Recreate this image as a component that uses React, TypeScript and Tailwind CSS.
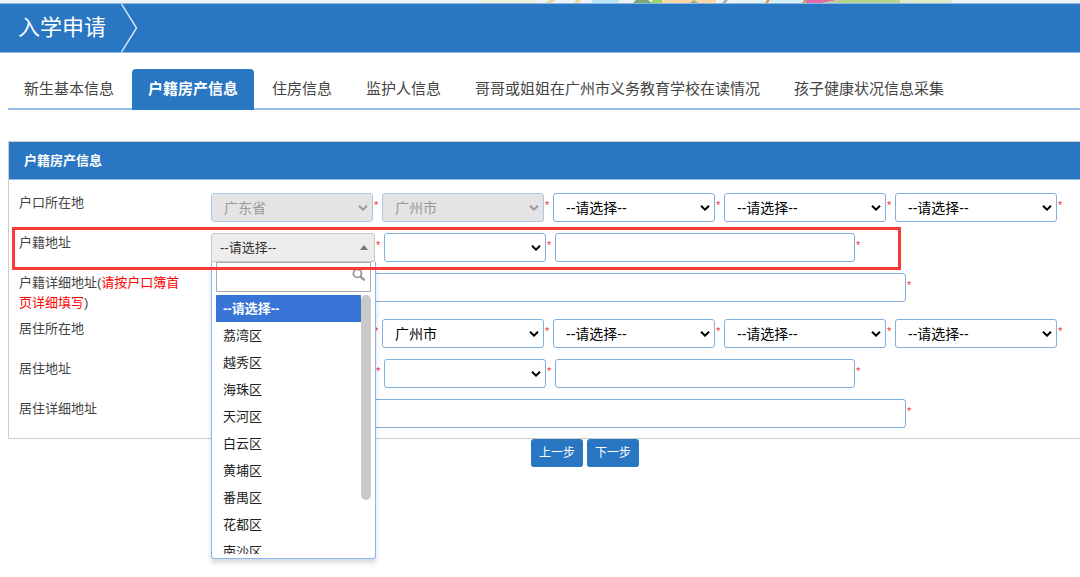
import { useState } from 'react';

const TABS = [
  '新生基本信息',
  '户籍房产信息',
  '住房信息',
  '监护人信息',
  '哥哥或姐姐在广州市义务教育学校在读情况',
  '孩子健康状况信息采集',
];

const DISTRICTS = [
  '--请选择--',
  '荔湾区',
  '越秀区',
  '海珠区',
  '天河区',
  '白云区',
  '黄埔区',
  '番禺区',
  '花都区',
  '南沙区',
];

const FIELD = 'h-[29px] rounded-[3px] border border-[#7fb0e0] bg-white text-sm text-black outline-none';

function Star() {
  return <span className="w-[9px] shrink-0 pt-0.5 pl-px text-[11px] leading-5 text-red-500">*</span>;
}

function Row({ label, htmlFor, children }: { label: React.ReactNode; htmlFor: string; children: React.ReactNode }) {
  return (
    <div className="relative flex items-start pt-1.5">
      <label htmlFor={htmlFor} className="w-48 shrink-0 pr-6 text-[13px] leading-5 text-[#444]">
        {label}
      </label>
      <div className="mb-[5px] flex shrink-0">{children}</div>
    </div>
  );
}

function Select({ id, name, value = '', disabled }: { id?: string; name: string; value?: string; disabled?: boolean }) {
  return (
    <>
      <span className="relative w-[162px] shrink-0">
        <select
          id={id}
          aria-label={name}
          disabled={disabled}
          className={`${FIELD} w-full appearance-none pl-3 disabled:border-[#a9c8e8] disabled:bg-[#e4e4e4] disabled:text-[#999] disabled:opacity-100`}
        >
          <option>{value}</option>
        </select>
        <svg
          viewBox="0 0 10 6"
          className={`pointer-events-none absolute top-3 right-[5px] h-1.5 w-2.5 ${disabled ? 'text-[#999]' : 'text-black'}`}
          fill="none"
          stroke="currentColor"
          strokeWidth="2"
        >
          <path d="M1 0.8 L5 4.6 L9 0.8" />
        </svg>
      </span>
      <Star />
    </>
  );
}

function DistrictPicker({ id, initial, defaultOpen }: { id: string; initial: string; defaultOpen?: boolean }) {
  const [open, setOpen] = useState(!!defaultOpen);
  const [value, setValue] = useState(initial);
  const [query, setQuery] = useState('');

  return (
    <>
      <div className="relative w-[164px] shrink-0">
        <button
          id={id}
          type="button"
          onClick={() => setOpen(!open)}
          className={`flex h-[29px] w-full items-center justify-between border border-[#c8c8c8] bg-[#ededed] pr-1.5 pl-2 text-[13px] text-[#333] ${open ? 'rounded-t-[3px]' : 'rounded-[3px]'}`}
        >
          <span>{value}</span>
          <svg viewBox="0 0 8 5" className="h-[5px] w-2 fill-[#777]">
            <path d="M4 0 L8 5 H0 Z" />
          </svg>
        </button>

        {open && (
          <div className="absolute top-full -right-px left-0 z-10 rounded-b-[3px] border border-t-0 border-[#8ab4f8] bg-white px-1 pb-1 shadow-[0_4px_5px_rgba(0,0,0,0.15)]">
            <div className="relative">
              <input
                aria-label="搜索"
                value={query}
                onChange={(e) => setQuery(e.target.value)}
                className="block h-[30px] w-full border border-[#aaa] pr-6 pl-1 text-[13px] outline-none"
              />
              <svg viewBox="0 0 14 14" className="absolute top-1.5 right-[5px] size-3.5" fill="none" stroke="#999">
                <circle cx="5.4" cy="5.4" r="4" strokeWidth="1.8" />
                <path d="M8.4 8.4 L12.6 12.4" strokeWidth="2.4" />
              </svg>
            </div>
            <div className="mt-[3px] flex h-[259px] overflow-hidden">
              <ul className="grow text-[13px] leading-[27px] text-[#222]">
                {DISTRICTS.filter((d) => d.includes(query)).map((d) => (
                  <li
                    key={d}
                    onClick={() => {
                      setValue(d);
                      setOpen(false);
                    }}
                    className={`cursor-pointer pl-[7px] ${d === value ? 'bg-[#3875d7] font-bold text-white' : ''}`}
                  >
                    {d}
                  </li>
                ))}
              </ul>
              <div className="h-[205px] w-2.5 rounded-full bg-[#c9c9c9]" />
            </div>
          </div>
        )}
      </div>
      <Star />
    </>
  );
}

// Sliver of the site banner above the title bar
function Banner() {
  return (
    <svg viewBox="0 0 1080 3" preserveAspectRatio="none" className="block h-[3px] w-full bg-[#eef2f9]">
      <rect x="480" width="56" height="3" fill="#ecefdc" />
      <path d="M545 3 L550 0 H556 L551 3 Z M574 3 L576 0 H581 L578 3 Z" fill="#ecd98f" />
      <rect x="592" width="27" height="3" fill="#b9e6f5" />
      <path d="M633 3 L636 0 H648 L652 3 Z" fill="#7fa876" />
      <rect x="652" width="10" height="3" fill="#9ed86a" />
      <rect x="662" width="54" height="3" fill="#f8d8a6" />
      <path d="M690 3 L694 0 L698 3 Z M722 3 L725 0 H728 L725 3 Z" fill="#93b088" />
      <rect x="740" width="26" height="3" fill="#e2f3f2" />
      <path d="M765 3 L767 0 H770 L768 3 Z M802 3 L804 0 H807 L805 3 Z" fill="#d89a55" />
      <rect x="770" width="32" height="3" fill="#d5f0f7" />
      <path d="M806 3 V0 H838 L822 3 Z" fill="#df6bab" />
      <path d="M822 3 L838 0 H900 V3 Z" fill="#b4d490" />
      <rect x="900" width="52" height="3" fill="#dfebc6" />
    </svg>
  );
}

export default function App() {
  const [tab, setTab] = useState(1);

  return (
    <main className="min-h-screen overflow-x-hidden bg-white font-['Liberation_Sans','Noto_Sans_CJK_SC',sans-serif]">
      <Banner />
      <header className="flex h-[50px] items-center border-y border-[#8db8e4] bg-[#2976c2] pl-[18px]">
        <h1 className="w-[103px] text-[22px] leading-8 text-white">入学申请</h1>
        <svg viewBox="0 0 17 48" className="h-12 w-[17px]" fill="none" stroke="#d3e4f5" strokeWidth="1.5">
          <path d="M0.5 0 L15.5 24 L0.5 48" />
        </svg>
      </header>

      <div className="pl-2">
        <nav className="mt-4 flex gap-0.5 border-b-2 border-[#94bde6] whitespace-nowrap">
          {TABS.map((t, i) => (
            <button
              key={t}
              type="button"
              onClick={() => setTab(i)}
              className={`-mb-0.5 h-[41px] shrink-0 rounded-t px-4 text-[15px] ${i === tab ? 'bg-[#2976c2] font-bold text-white' : 'text-[#444]'}`}
            >
              {t}
            </button>
          ))}
        </nav>

        <section className="mt-[31px] border border-r-0 border-[#ccc]">
          <h2 className="h-[38px] border-b border-[#94bde6] bg-[#2976c2] pl-[15px] text-[13px] leading-[37px] font-bold text-white">
            户籍房产信息
          </h2>
          <div className="px-2.5 pt-[7px] pb-[5px]">
            <Row label="户口所在地" htmlFor="hk-province">
              <Select id="hk-province" name="省" value="广东省" disabled />
              <Select name="市" value="广州市" disabled />
              <Select name="区" value="--请选择--" />
              <Select name="街道" value="--请选择--" />
              <Select name="居委" value="--请选择--" />
            </Row>
            <Row label="户籍地址" htmlFor="hj-district">
              <DistrictPicker id="hj-district" initial={DISTRICTS[0]} defaultOpen />
              <Select name="户籍街道" />
              <input aria-label="户籍门牌" className={`${FIELD} w-[300px] px-3`} />
              <Star />
              <div className="pointer-events-none absolute top-0 -left-[7px] z-20 h-[43px] w-[889px] border-[3px] border-[#fa3a38]" />
            </Row>
            <Row
              htmlFor="hj-detail"
              label={
                <>
                  户籍详细地址(<span className="text-[#f00]">请按户口簿首页详细填写</span>)
                </>
              }
            >
              <input id="hj-detail" className={`${FIELD} w-[695px] px-3`} />
              <Star />
            </Row>
            <Row label="居住所在地" htmlFor="jz-province">
              <Select id="jz-province" name="居住省" />
              <Select name="居住市" value="广州市" />
              <Select name="居住区" value="--请选择--" />
              <Select name="居住街道" value="--请选择--" />
              <Select name="居住居委" value="--请选择--" />
            </Row>
            <Row label="居住地址" htmlFor="jz-district">
              <DistrictPicker id="jz-district" initial="" />
              <Select name="居住路名" />
              <input aria-label="居住门牌" className={`${FIELD} w-[300px] px-3`} />
              <Star />
            </Row>
            <Row label="居住详细地址" htmlFor="jz-detail">
              <input id="jz-detail" className={`${FIELD} w-[695px] px-3`} />
              <Star />
            </Row>
          </div>
        </section>

        <div className="flex justify-center gap-1 pl-[82px]">
          <button type="button" className="h-7 rounded-[3px] bg-[#2976c2] px-2 text-xs text-white">
            上一步
          </button>
          <button type="button" className="h-7 rounded-[3px] bg-[#2976c2] px-2 text-xs text-white">
            下一步
          </button>
        </div>
      </div>
    </main>
  );
}
